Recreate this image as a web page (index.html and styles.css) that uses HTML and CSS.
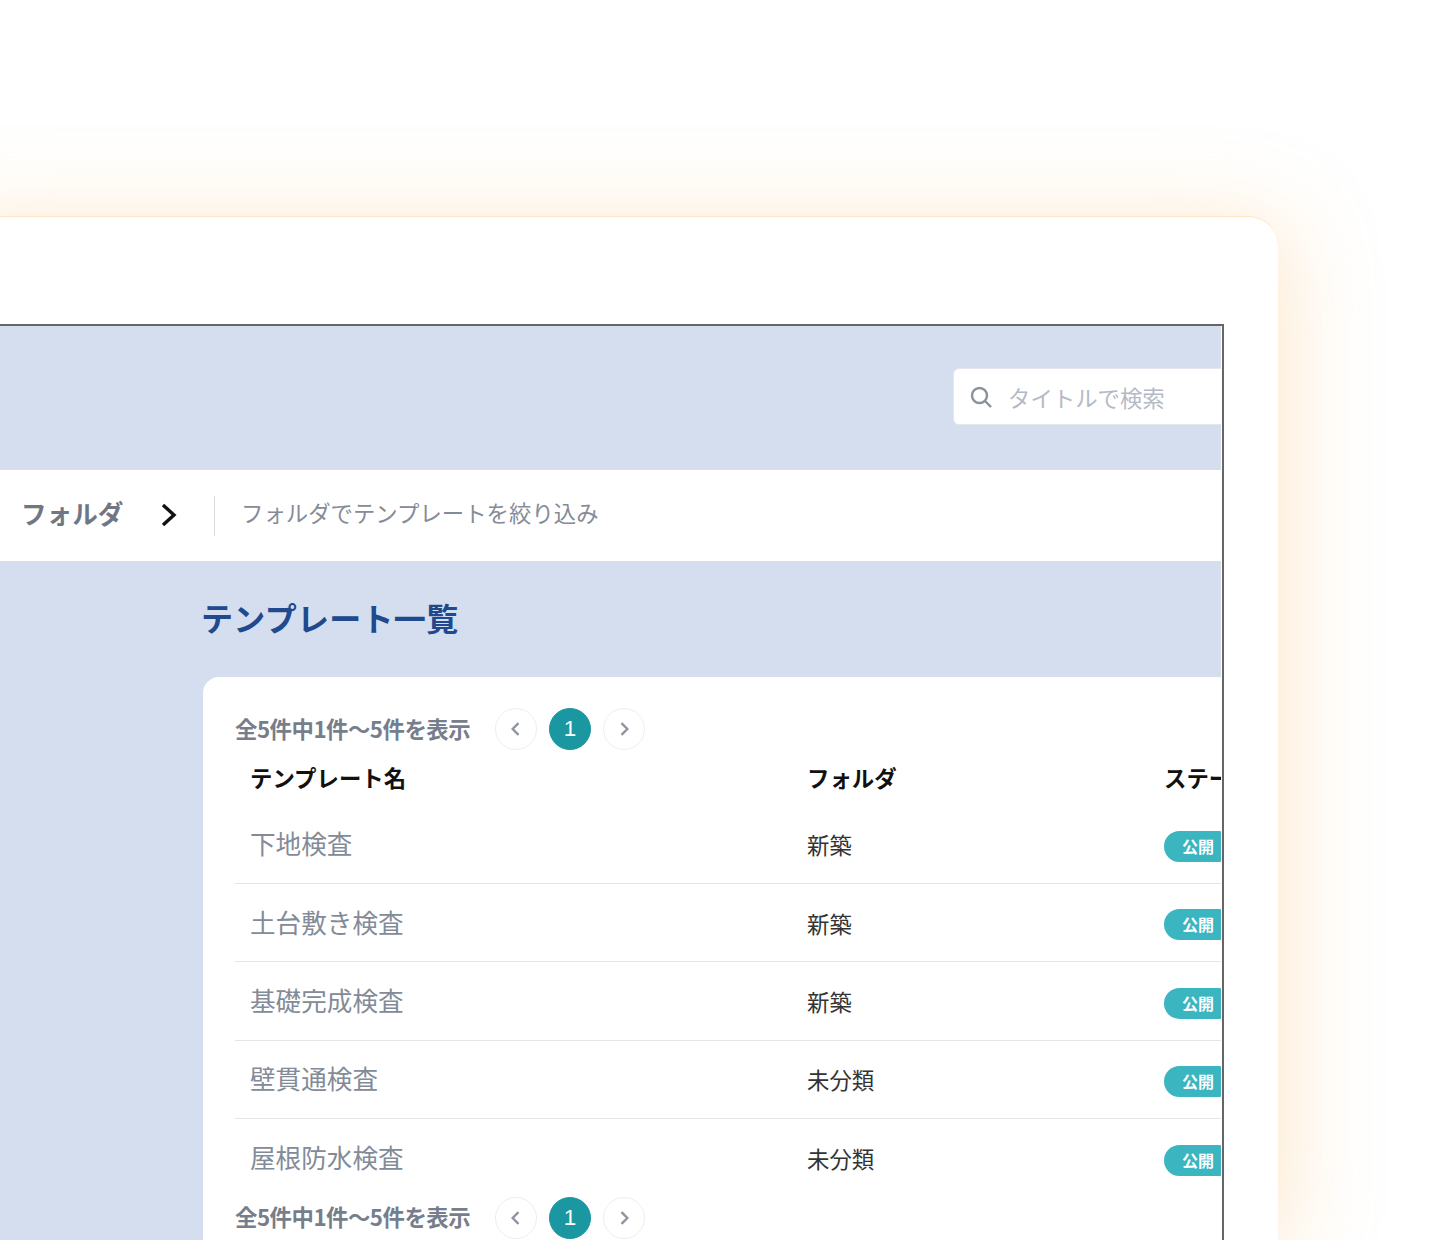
FILE: index.html
```html
<!DOCTYPE html>
<html lang="ja">
<head>
  <meta charset="UTF-8">
  <title>テンプレート一覧</title>
  <link rel="stylesheet" href="styles.css">
</head>
<body>

  <div class="panel">
    <div class="frame">

      <div class="topbar">
        <div class="search">
          <svg class="search-icon" viewBox="0 0 24 24"><circle cx="10.5" cy="10.5" r="7.5"></circle><path d="M16 16l6 6"></path></svg>
          <span class="search-text">タイトルで検索</span>
        </div>
      </div>

      <div class="filter">
        <span class="filter-label">フォルダ</span>
        <svg class="filter-arrow" viewBox="0 0 18 24"><path d="M3 2l11 10L3 22"></path></svg>
        <span class="filter-hint">フォルダでテンプレートを絞り込み</span>
      </div>

      <div class="content">
        <h1 class="title">テンプレート一覧</h1>
        <div class="list">

          <div class="pager">
            <span class="pager-text">全5件中1件〜5件を表示</span>
            <span class="page-btn"><svg viewBox="0 0 12 12"><path d="M7.5 2.5L4 6l3.5 3.5"></path></svg></span>
            <span class="page-btn current">1</span>
            <span class="page-btn"><svg viewBox="0 0 12 12"><path d="M4.5 2.5L8 6l-3.5 3.5"></path></svg></span>
          </div>

          <table>
            <thead>
              <tr><th class="col-name">テンプレート名</th><th class="col-folder">フォルダ</th><th class="col-status">ステータス</th></tr>
            </thead>
            <tbody>
              <tr><td class="name">下地検査</td><td>新築</td><td><span class="badge">公開</span></td></tr>
              <tr><td class="name">土台敷き検査</td><td>新築</td><td><span class="badge">公開</span></td></tr>
              <tr><td class="name">基礎完成検査</td><td>新築</td><td><span class="badge">公開</span></td></tr>
              <tr><td class="name">壁貫通検査</td><td>未分類</td><td><span class="badge">公開</span></td></tr>
              <tr><td class="name">屋根防水検査</td><td>未分類</td><td><span class="badge">公開</span></td></tr>
            </tbody>
          </table>

          <div class="pager pager-bottom">
            <span class="pager-text">全5件中1件〜5件を表示</span>
            <span class="page-btn"><svg viewBox="0 0 12 12"><path d="M7.5 2.5L4 6l3.5 3.5"></path></svg></span>
            <span class="page-btn current">1</span>
            <span class="page-btn"><svg viewBox="0 0 12 12"><path d="M4.5 2.5L8 6l-3.5 3.5"></path></svg></span>
          </div>

        </div>
      </div>

    </div>
  </div>

</body>
</html>
```

FILE: styles.css
```css
html, body { margin: 0; height: 1240px; overflow: hidden; background: #fff; }
body { font-family: "Noto Sans CJK JP", "Noto Sans", sans-serif; padding-top: 216px; box-sizing: border-box; }

.panel { margin-left: -60px; width: 1338px; height: 1024px; box-sizing: border-box; padding: 108px 54px 0 0; background: #fff; border-radius: 0 30px 0 0; border-top: 1px solid #fde6c4; box-shadow: 8px 8px 90px rgba(250, 185, 100, 0.34); }
.frame { height: 916px; box-sizing: border-box; border: 1px solid #666; border-bottom: none; border-right-width: 2px; border-top-width: 2px; padding-right: 1px; background: #fff; overflow: hidden; margin-top: -1px; }

.topbar { height: 144px; background: #d5deef; box-sizing: border-box; padding: 42px 0 0 1012px; overflow: hidden; }
.search { width: 400px; height: 57px; box-sizing: border-box; display: flex; align-items: center; padding-left: 16px; background: #fff; border: 1px solid #e3e7ee; border-radius: 6px; }
.search-icon { width: 24px; height: 24px; margin-left: -1px; fill: none; stroke: #8a929e; stroke-width: 2.4; }
.search-text { margin-left: 15px; font-size: 22.4px; color: #b4bac4; }

.filter { height: 91px; display: flex; align-items: center; padding-left: 80px; background: #fff; }
.filter-label { width: 138px; padding-bottom: 6px; font-size: 25.6px; font-weight: 700; color: #6f7785; }
.filter-arrow { width: 18px; height: 24px; margin-left: 1px; margin-bottom: 1px; fill: none; stroke: #111; stroke-width: 3.4; }
.filter-hint { margin-left: 36px; padding-left: 26px; height: 40px; line-height: 33px; border-left: 1px solid #d8dbe0; font-size: 22.4px; color: #858c98; }

.content { background: #d5deef; padding: 30px 0 0 262px; height: 800px; overflow: hidden; }
.title { margin: 0 0 34px -2px; font-size: 32px; line-height: 52px; font-weight: 700; letter-spacing: 0.3px; color: #20498e; }

.list { width: 1100px; height: 700px; box-sizing: border-box; padding: 31px 32px 0; background: #fff; border-radius: 16px 0 0 0; }

.pager { display: flex; align-items: center; height: 42px; }
.pager-text { width: 260px; padding-bottom: 3px; font-size: 22.4px; font-weight: 700; letter-spacing: -0.5px; color: #767e8c; }
.page-btn { width: 42px; height: 42px; box-sizing: border-box; margin-right: 12px; display: flex; align-items: center; justify-content: center; border: 1px solid #eceef1; border-radius: 50%; font-family: "Liberation Sans", sans-serif; font-size: 22.4px; }
.page-btn svg { width: 20px; height: 20px; fill: none; stroke: #8e949e; stroke-width: 1.4; }
.page-btn.current { background: #1a97a0; border-color: #1a97a0; color: #fff; }

table { border-collapse: collapse; table-layout: fixed; width: 1100px; }
th { height: 55px; padding: 0 15px 2px; box-sizing: border-box; text-align: left; font-size: 22.4px; font-weight: 700; color: #111; white-space: nowrap; }
.col-name { width: 557px; }
.col-folder { width: 357px; }
td { height: 78.4px; box-sizing: border-box; padding: 0 15px; font-size: 22.4px; color: #333; border-bottom: 1px solid #e2e5ea; }
tr:last-child td { border-bottom: none; }
td.name { padding-bottom: 3px; font-size: 25.6px; color: #838b98; }
.badge { display: inline-block; width: 70px; height: 31px; line-height: 31px; padding-left: 18px; box-sizing: border-box; background: #3bb5c0; border-radius: 16px; color: #fff; font-size: 16px; font-weight: 700; vertical-align: middle; }
```
